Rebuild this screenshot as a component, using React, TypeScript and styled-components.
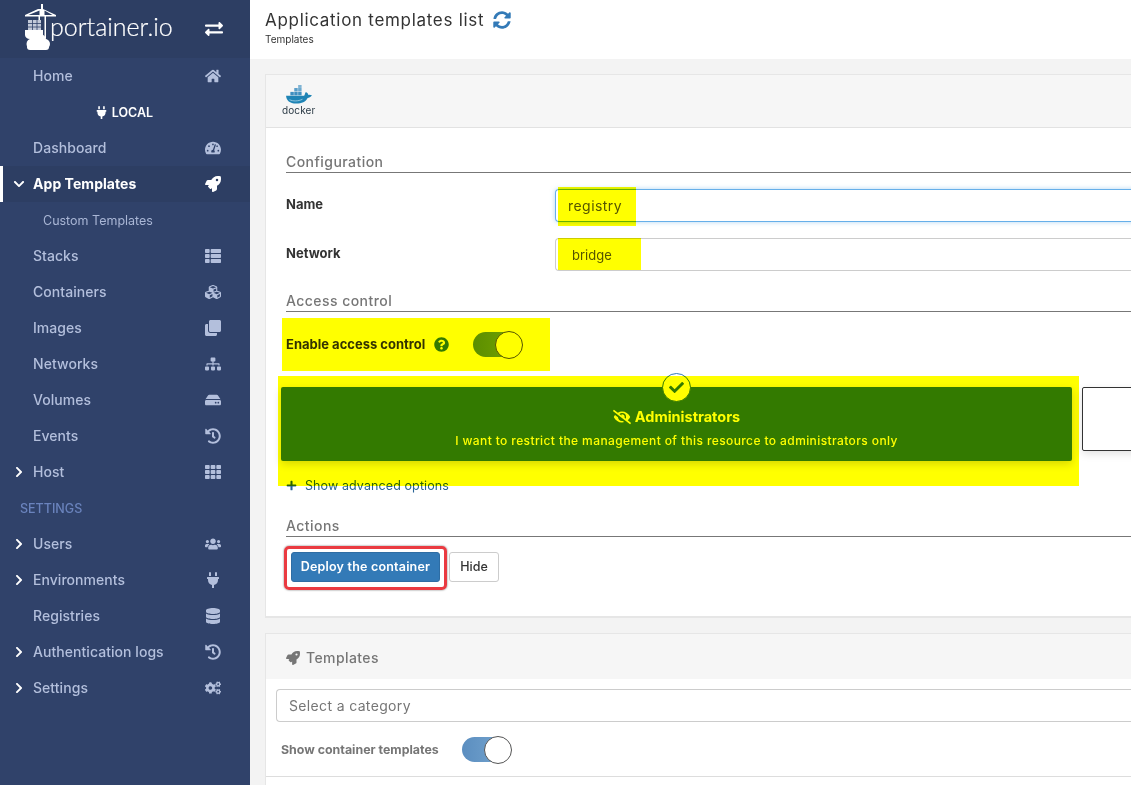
import React from 'react';
import styled, { createGlobalStyle } from 'styled-components';
import {
  FaChevronDown, FaChevronRight, FaClone, FaCogs, FaCubes, FaDatabase, FaExchangeAlt, FaEyeSlash, FaHdd,
  FaHistory, FaHome, FaPlug, FaPlus, FaQuestionCircle, FaRocket, FaSitemap, FaSyncAlt, FaTachometerAlt,
  FaTh, FaThList, FaUsers, FaCheck,
} from 'react-icons/fa';

const GlobalStyle = createGlobalStyle`
  html, body { margin: 0; height: 100%; overflow: hidden; }
  body { font-family: Inter, "Open Sans", sans-serif; color: #333; }
  * { box-sizing: border-box; }
`;

const menuTop = [
  { label: 'Stacks', icon: <FaThList /> },
  { label: 'Containers', icon: <FaCubes /> },
  { label: 'Images', icon: <FaClone /> },
  { label: 'Networks', icon: <FaSitemap /> },
  { label: 'Volumes', icon: <FaHdd /> },
  { label: 'Events', icon: <FaHistory /> },
  { label: 'Host', icon: <FaTh />, more: true },
];

const menuSettings = [
  { label: 'Users', icon: <FaUsers />, more: true },
  { label: 'Environments', icon: <FaPlug />, more: true },
  { label: 'Registries', icon: <FaDatabase /> },
  { label: 'Authentication logs', icon: <FaHistory />, more: true },
  { label: 'Settings', icon: <FaCogs />, more: true },
];

const PortainerMark = () => (
  <svg width="34" height="48" viewBox="0 0 34 48" fill="#fff">
    <path d="M14 5 L17 5 L17 0 L19 0 L19 5 L32 11 L32 12.500 L22 12.500 L22 34 L20.500 34 L20.500 12.500 L16 12.500 L16 16 L14.500 16 L14.500 12.500 L1 12.500 L1 11 Z M4.500 11 L15.500 11 L15.500 6.500 Z M20.500 6.500 L20.500 11 L28.500 11 Z" fillRule="evenodd" />
    <rect x="4" y="16" width="13" height="13" fill="#c3cad9" />
    <path d="M4 19.500h13M4 23h13M4 26.500h13M8.500 16v13M13 16v13" stroke="#30426a" strokeWidth="0.8" />
    <path d="M1 26 H19 V31 C19 34 16 35 14 35 H6 C3 35 1 33 1 31 Z" />
    <circle cx="15" cy="37" r="7.500" />
    <circle cx="8" cy="40" r="5.500" />
    <circle cx="21" cy="40" r="5" />
    <rect x="3" y="40" width="22" height="6" rx="3" />
  </svg>
);

const DockerMark = () => (
  <svg width="28" height="19" viewBox="0 -2 32 22">
    <g fill="#3f8fc0">
      <rect x="6" y="6" width="4" height="4" />
      <rect x="10.500" y="6" width="4" height="4" />
      <rect x="15" y="6" width="4" height="4" />
      <rect x="10.500" y="1.500" width="4" height="4" fill="#5b9fc9" />
      <rect x="15" y="1.500" width="4" height="4" fill="#6ba9cf" />
      <rect x="15" y="-2" width="4" height="3.400" fill="#7fb4d4" />
    </g>
    <path d="M1 10.500 H22 C23 8.500 23 7 24 6 C26 7 26.500 8 26.500 9.300 C28 9 30 9.300 31 10 C29.500 12.500 27.500 13 26 13 C24 17.500 19 19.500 13 19.500 C5 19.500 1.500 16 1 10.500 Z" fill="#1f84b5" />
    <path d="M5 15 C9 17 15 17 20 14.500" stroke="#bfe0ef" strokeWidth="0.8" fill="none" />
  </svg>
);

export default function App() {
  return (
    <Page>
      <GlobalStyle />
      <Sidebar>
        <LogoBar>
          <LogoLink>
            <PortainerMark />
            <LogoText>portainer.io</LogoText>
          </LogoLink>
          <SwapIcon><FaExchangeAlt /></SwapIcon>
        </LogoBar>
        <NavItem label="Home" icon={<FaHome />} />
        <EndpointRow><FaPlug /> LOCAL</EndpointRow>
        <NavItem label="Dashboard" icon={<FaTachometerAlt />} />
        <NavItem label="App Templates" icon={<FaRocket />} active open />
        <SubItem>Custom Templates</SubItem>
        {menuTop.map((item) => (
          <NavItem key={item.label} label={item.label} icon={item.icon} more={item.more} />
        ))}
        <NavHeading>SETTINGS</NavHeading>
        {menuSettings.map((item) => (
          <NavItem key={item.label} label={item.label} icon={item.icon} more={item.more} />
        ))}
      </Sidebar>

      <Main>
        <TopBar>
          <PageTitle>
            Application templates list
            <RefreshIcon><FaSyncAlt /></RefreshIcon>
          </PageTitle>
          <Crumb>Templates</Crumb>
        </TopBar>

        <Content>
          <Card>
            <DockerHeader>
              <DockerLogo>
                <DockerMark />
                <DockerWord>docker</DockerWord>
              </DockerLogo>
            </DockerHeader>
            <CardBody>
              <SectionTitle>Configuration</SectionTitle>
              <FormRow $mt={16}>
                <FieldLabel>Name</FieldLabel>
                <TextInput>
                  registry
                  <Mark $top={-3} $left={2} $width={78} $height={39} />
                </TextInput>
              </FormRow>
              <FormRow $mt={16}>
                <FieldLabel>Network</FieldLabel>
                <SelectBox>
                  bridge
                  <Mark $top={-1} $left={2} $width={83} $height={32} />
                </SelectBox>
              </FormRow>

              <SectionTitle $mt={21}>Access control</SectionTitle>
              <ToggleRow>
                <ToggleLabel $width={187}>
                  Enable access control
                  <HelpIcon><FaQuestionCircle /></HelpIcon>
                </ToggleLabel>
                <Toggle />
                <Mark $top={-13} $left={-4} $width={268} $height={53} />
              </ToggleRow>

              <BoxSelector>
                <Choice>
                  <CheckBadge><FaCheck /></CheckBadge>
                  <ChoiceTitle><FaEyeSlash /> Administrators</ChoiceTitle>
                  <ChoiceText>I want to restrict the management of this resource to administrators only</ChoiceText>
                </Choice>
                <OtherChoice />
                <Mark $top={-11} $left={-3} $width={801} $height={110} />
              </BoxSelector>

              <AdvancedLink><FaPlus /> Show advanced options</AdvancedLink>

              <SectionTitle $mt={24}>Actions</SectionTitle>
              <ActionRow>
                <DeployOutline>
                  <PrimaryButton>Deploy the container</PrimaryButton>
                </DeployOutline>
                <PlainButton>Hide</PlainButton>
              </ActionRow>
            </CardBody>
          </Card>

          <Card>
            <TemplatesHeader><FaRocket /> Templates</TemplatesHeader>
            <TemplatesBody>
              <CategorySelect>Select a category</CategorySelect>
              <ToggleRow $mt={14}>
                <ToggleLabel $width={186} $small>Show container templates</ToggleLabel>
                <Toggle />
              </ToggleRow>
              <Rule />
            </TemplatesBody>
          </Card>
        </Content>
      </Main>
    </Page>
  );
}

type NavItemProps = { label: string; icon: React.ReactNode; active?: boolean; open?: boolean; more?: boolean };

const NavItem = ({ label, icon, active, open, more }: NavItemProps) => (
  <NavRow $active={active}>
    <Caret>{open ? <FaChevronDown /> : more ? <FaChevronRight /> : null}</Caret>
    <NavLabel>{label}</NavLabel>
    <NavIcon>{icon}</NavIcon>
  </NavRow>
);

const Page = styled.div`
  display: flex;
  height: 785px;
  width: 1131px;
  overflow: hidden;
  background: #f3f3f3;
`;

const Sidebar = styled.nav`
  width: 250px;
  flex: none;
  background: #30426a;
  color: #b3bfdc;
`;

const LogoBar = styled.div`
  height: 58px;
  background: #2d3e63;
  display: flex;
  align-items: flex-start;
  justify-content: space-between;
  padding: 4px 27px 0 24px;
`;

const LogoLink = styled.div`
  display: flex;
  align-items: flex-start;
  color: #fff;
`;

const LogoText = styled.span`
  font-family: Lato, sans-serif;
  font-weight: 300;
  font-size: 25px;
  line-height: 30px;
  margin: 7px 0 0 -8px;
  -webkit-text-stroke: 0.2px #fff;
`;

const SwapIcon = styled.span`
  color: #fff;
  font-size: 18px;
  margin-top: 16px;
  display: flex;
`;

const NavRow = styled.div<{ $active?: boolean }>`
  position: relative;
  height: 36px;
  display: flex;
  align-items: center;
  padding-left: ${(p) => (p.$active ? 10 : 13)}px;
  font-size: 14px;
  font-weight: ${(p) => (p.$active ? 700 : 500)};
  color: ${(p) => (p.$active ? '#fff' : '#b3bfdc')};
  background: ${(p) => (p.$active ? '#2d3e63' : 'transparent')};
  border-left: ${(p) => (p.$active ? '3px solid #fff' : '0')};
`;

const Caret = styled.span`
  width: 20px;
  font-size: 12px;
  color: #fff;
  display: flex;
  align-items: center;
`;

const NavLabel = styled.span`
  flex: 1;
  margin-bottom: 2px;
  letter-spacing: 0.05px;
`;

const NavIcon = styled.span`
  width: 18px;
  margin-right: 28px;
  display: flex;
  justify-content: center;
  font-size: 16px;
`;

const EndpointRow = styled.div`
  height: 36px;
  display: flex;
  align-items: center;
  justify-content: center;
  gap: 4px;
  color: #fff;
  font-size: 12.500px;
  font-weight: 600;
  margin-left: -2px;
  & > svg { font-size: 13px; }
`;

const SubItem = styled.div`
  height: 36px;
  display: flex;
  align-items: center;
  padding-left: 43px;
  font-size: 12.500px;
  color: #a9b6d5;
`;

const NavHeading = styled.div`
  height: 36px;
  display: flex;
  align-items: center;
  padding-left: 20px;
  font-size: 12.500px;
  color: #6a83bd;
  font-weight: 500;
`;

const Main = styled.main`
  flex: 1;
  min-width: 0;
  overflow: hidden;
`;

const TopBar = styled.header`
  height: 59px;
  background: #fff;
  padding: 10px 0 0 15px;
`;

const PageTitle = styled.h1`
  margin: 0;
  font-size: 17px;
  line-height: 20px;
  font-weight: 400;
  letter-spacing: 0.7px;
  color: #333;
  display: flex;
  align-items: center;
`;

const RefreshIcon = styled.span`
  color: #337ab7;
  font-size: 18px;
  margin-left: 9px;
  display: flex;
`;

const Crumb = styled.div`
  font-size: 10px;
  line-height: 12px;
  margin-top: 3px;
  color: #333;
`;

const Content = styled.div`
  padding: 15px 0 0 15px;
  width: 1200px;
  display: flex;
  flex-direction: column;
  gap: 15px;
`;

const Card = styled.section`
  background: #fff;
  border: 1px solid #e6e6e6;
  border-bottom-width: 2px;
`;

const DockerHeader = styled.div`
  height: 53px;
  background: #f6f6f6;
  border-bottom: 1px solid #e2e2e2;
  padding: 10px 0 0 16px;
`;

const DockerLogo = styled.div`
  display: flex;
  flex-direction: column;
  align-items: flex-start;
  width: 34px;
  & > svg { margin-left: 3px; }
`;

const DockerWord = styled.span`
  font-size: 10px;
  line-height: 11px;
  color: #2b3a45;
  letter-spacing: 0.1px;
  margin-top: 1px;
`;

const CardBody = styled.div`
  padding: 25px 0 26px 20px;
`;

const SectionTitle = styled.h2<{ $mt?: number }>`
  margin: ${(p) => p.$mt ?? 0}px 0 0;
  height: 20px;
  border-bottom: 1px solid #777;
  font-size: 14px;
  line-height: 17px;
  font-weight: 500;
  letter-spacing: 0.45px;
  color: #767676;
`;

const FormRow = styled.div<{ $mt: number }>`
  display: grid;
  grid-template-columns: 269px 1fr;
  align-items: center;
  margin-top: ${(p) => p.$mt}px;
`;

const FieldLabel = styled.label`
  font-size: 13px;
  font-weight: 700;
  margin-top: -3px;
  color: #333;
`;

const TextInput = styled.div`
  position: relative;
  height: 33px;
  display: flex;
  align-items: center;
  padding-left: 12px;
  font-size: 14px;
  letter-spacing: 0.45px;
  color: #555;
  background: #fff;
  border: 1px solid #66afe9;
  border-radius: 4px 0 0 4px;
  border-right: 0;
  box-shadow: 0 0 5px rgba(102, 175, 233, 0.5);
`;

const SelectBox = styled.div`
  position: relative;
  height: 33px;
  display: flex;
  align-items: center;
  padding-left: 16px;
  font-size: 13px;
  color: #555;
  background: #fff;
  border: 1px solid #ccc;
  border-right: 0;
  border-radius: 4px 0 0 4px;
`;

const Mark = styled.div<{ $top: number; $left: number; $width: number; $height: number }>`
  position: absolute;
  top: ${(p) => p.$top}px;
  left: ${(p) => p.$left}px;
  width: ${(p) => p.$width}px;
  height: ${(p) => p.$height}px;
  background: #ffff00;
  mix-blend-mode: multiply;
  pointer-events: none;
  z-index: 5;
`;

const ToggleRow = styled.div<{ $mt?: number }>`
  position: relative;
  display: flex;
  align-items: center;
  height: 26px;
  margin-top: ${(p) => p.$mt ?? 19}px;
`;

const ToggleLabel = styled.span<{ $width: number; $small?: boolean }>`
  width: ${(p) => p.$width}px;
  padding-left: ${(p) => (p.$small ? 5 : 0)}px;
  font-size: ${(p) => (p.$small ? 12.4 : 13)}px;
  font-weight: 700;
  color: ${(p) => (p.$small ? '#767676' : '#333')};
  display: flex;
  align-items: center;
`;

const HelpIcon = styled.span`
  color: #337ab7;
  font-size: 15px;
  margin-left: 9px;
  display: flex;
`;

const Toggle = styled.div`
  position: relative;
  width: 49px;
  height: 25px;
  border-radius: 13px;
  background: linear-gradient(90deg, #5b8ec0, #78a7d0);
  &::after {
    content: '';
    position: absolute;
    right: -1px;
    top: -1px;
    width: 26px;
    height: 26px;
    border-radius: 50%;
    background: #fff;
    border: 1px solid #555;
  }
`;

const BoxSelector = styled.div`
  position: relative;
  display: flex;
  gap: 10px;
  margin-top: 30px;
  margin-left: -5px;
`;

const Choice = styled.div`
  position: relative;
  flex: none;
  width: 791px;
  height: 74px;
  background: #337ab7;
  border-radius: 2px;
  color: #fff;
  text-align: center;
  box-shadow: 0 3px 8px rgba(0, 0, 0, 0.16);
  padding-top: 21px;
`;

const CheckBadge = styled.span`
  position: absolute;
  top: -14px;
  left: 381px;
  width: 29px;
  height: 29px;
  border-radius: 50%;
  background: #fff;
  border: 1px solid #337ab7;
  color: #337ab7;
  font-size: 15px;
  display: flex;
  align-items: center;
  justify-content: center;
`;

const ChoiceTitle = styled.div`
  font-size: 14.500px;
  line-height: 18px;
  font-weight: 700;
  display: flex;
  align-items: center;
  justify-content: center;
  gap: 4px;
  & > svg { font-size: 18px; }
`;

const ChoiceText = styled.div`
  font-size: 12px;
  line-height: 15px;
  font-weight: 500;
  margin-top: 7px;
  letter-spacing: 0.4px;
`;

const OtherChoice = styled.div`
  flex: 1;
  height: 64px;
  background: #fff;
  border: 1px solid #333;
  border-radius: 2px;
  box-shadow: 0 3px 8px rgba(0, 0, 0, 0.12);
`;

const AdvancedLink = styled.div`
  display: flex;
  align-items: center;
  gap: 8px;
  height: 16px;
  margin-top: 16px;
  font-size: 12.500px;
  color: #2a6496;
  letter-spacing: 0.1px;
  & > svg { font-size: 11px; }
`;

const ActionRow = styled.div`
  display: flex;
  align-items: flex-start;
  gap: 2px;
  margin: 9px 0 0 -2px;
`;

const DeployOutline = styled.div`
  border: 3px solid #ea3a41;
  border-radius: 5px;
  padding: 3px 4px 5px;
  box-shadow: 0 0 2px rgba(0, 0, 0, 0.6);
  display: flex;
`;

const PrimaryButton = styled.button`
  width: 149px;
  height: 30px;
  background: #337ab7;
  border: 1px solid #2e6da4;
  border-radius: 3px;
  color: #fff;
  font: 600 12.500px Inter, sans-serif;
  letter-spacing: 0.2px;
  padding: 0 0 2px;
`;

const PlainButton = styled.button`
  width: 50px;
  height: 30px;
  margin-top: 6px;
  background: #fff;
  border: 1px solid #ccc;
  border-radius: 3px;
  color: #333;
  font: 500 12.500px Inter, sans-serif;
  padding: 0 0 1px;
`;

const TemplatesHeader = styled.div`
  height: 45px;
  background: #f6f6f6;
  display: flex;
  align-items: center;
  gap: 6px;
  padding: 2px 0 0 20px;
  font-size: 14px;
  font-weight: 500;
  letter-spacing: 0.4px;
  color: #767676;
`;

const TemplatesBody = styled.div`
  padding: 10px 0 40px 10px;
`;

const CategorySelect = styled.div`
  height: 33px;
  display: flex;
  align-items: center;
  padding-left: 12px;
  font-size: 14px;
  letter-spacing: 0.35px;
  color: #767676;
  border: 1px solid #ccc;
  border-right: 0;
  border-radius: 4px 0 0 4px;
`;

const Rule = styled.hr`
  border: 0;
  border-top: 1px solid #ddd;
  margin: 14px 0 0 -10px;
`;
